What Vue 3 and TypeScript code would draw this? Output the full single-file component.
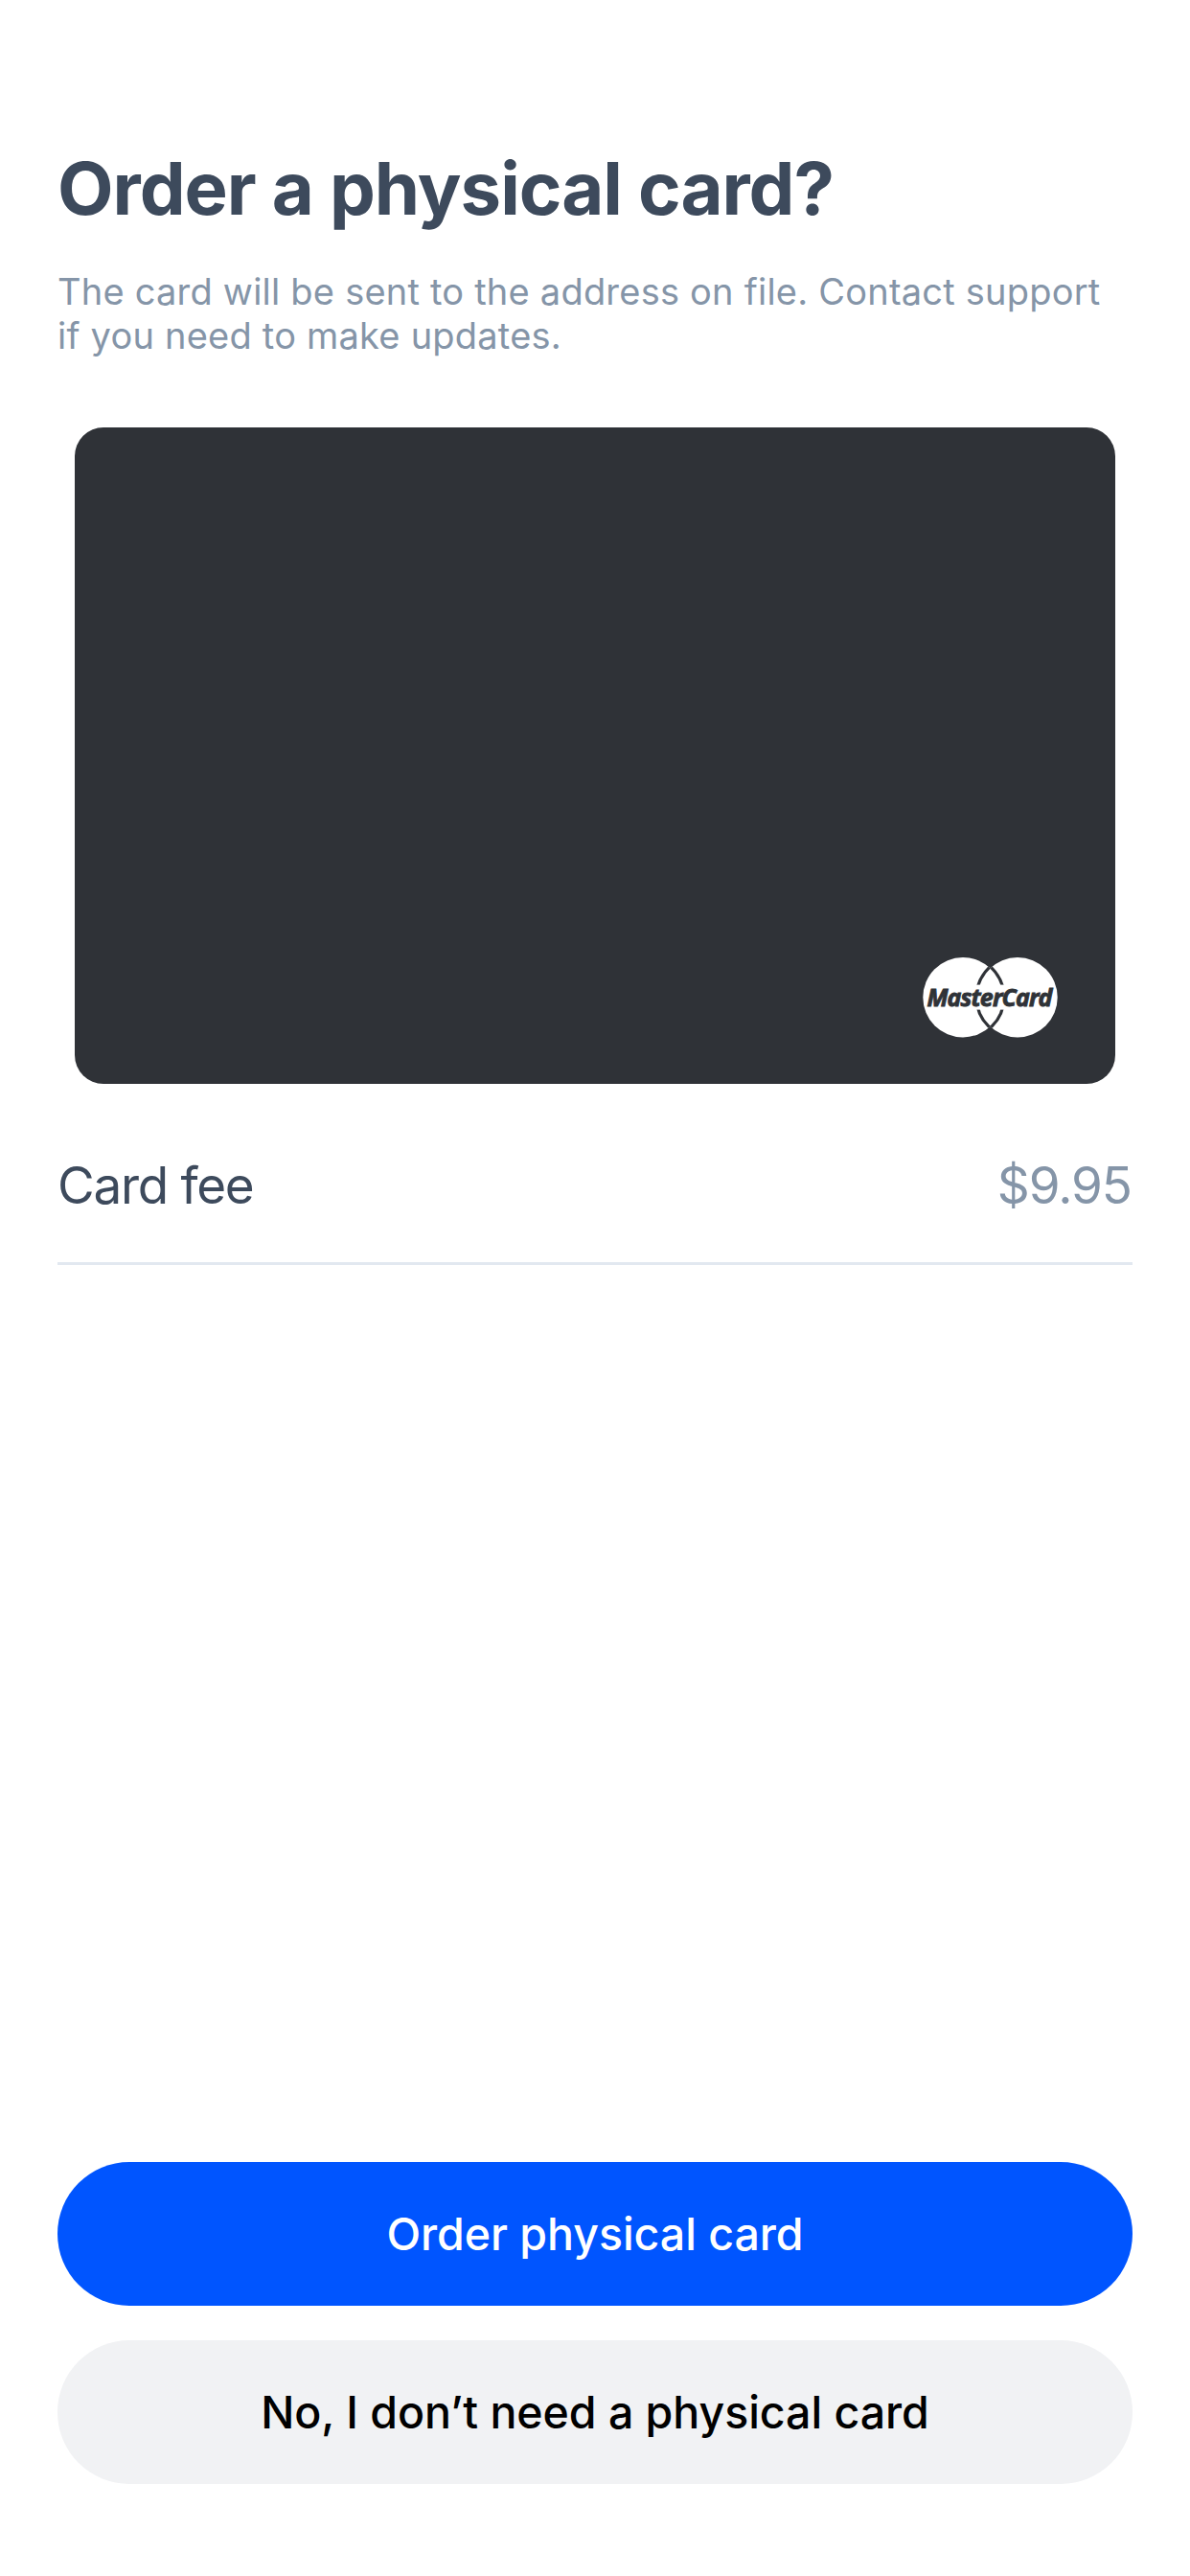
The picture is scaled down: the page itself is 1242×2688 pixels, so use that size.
<script setup lang="ts">
interface Fee {
  label: string
  amount: string
}

const fee: Fee = { label: 'Card fee', amount: '$9.95' }
</script>

<template>
  <main class="screen">
    <h1 class="title">Order a physical card?</h1>
    <p class="subtitle">
      The card will be sent to the address on file. Contact support<br />if you need to make updates.
    </p>

    <div class="card">
      <svg class="brand" width="142" height="84" viewBox="0 0 142 84" aria-label="MasterCard">
        <defs>
          <clipPath id="overlap-left"><circle cx="42" cy="41.7" r="41.7" /></clipPath>
          <clipPath id="overlap-right"><circle cx="99" cy="41.7" r="41.7" /></clipPath>
        </defs>
        <circle cx="42" cy="41.7" r="41.7" fill="#fff" />
        <circle cx="99" cy="41.7" r="41.7" fill="#fff" />
        <g fill="none" stroke="#2f3237" stroke-width="3.2">
          <g clip-path="url(#overlap-left)"><circle cx="99" cy="41.7" r="42.8" /></g>
          <g clip-path="url(#overlap-right)"><circle cx="42" cy="41.7" r="42.8" /></g>
        </g>
        <rect x="50" y="28.6" width="41" height="26" fill="#fff" />
        <text class="brand-name" x="4.5" y="51" textLength="130" lengthAdjust="spacingAndGlyphs">MasterCard</text>
      </svg>
    </div>

    <div class="fee-row">
      <span class="fee-label">{{ fee.label }}</span>
      <span class="fee-amount">{{ fee.amount }}</span>
    </div>

    <div class="actions">
      <button class="button primary" type="button">Order physical card</button>
      <button class="button secondary" type="button">No, I don’t need a physical card</button>
    </div>
  </main>
</template>

<style>
body {
  margin: 0;
  background: #fff;
}
</style>

<style scoped>
.screen {
  box-sizing: border-box;
  display: flex;
  flex-direction: column;
  width: 1242px;
  height: 2688px;
  padding: 150px 60px 96px;
  background: #fff;
  font-family: Inter, 'Liberation Sans', sans-serif;
}

.title {
  margin: 0;
  font-size: 76px;
  font-weight: 700;
  line-height: 92px;
  letter-spacing: -1px;
  color: #3d4a5c;
}

.subtitle {
  margin: 39px 0 0;
  font-size: 38px;
  line-height: 46px;
  letter-spacing: 0.22px;
  white-space: nowrap;
  color: #8595a8;
}

.card {
  box-sizing: border-box;
  display: flex;
  align-items: flex-end;
  justify-content: flex-end;
  height: 685px;
  margin: 73px 18px 0;
  padding: 0 59px 48px 0;
  border-radius: 30px;
  background: #2f3237;
}

.brand {
  display: block;
}

.brand-name {
  font-family: 'Open Sans', 'Noto Sans', sans-serif;
  font-size: 25.5px;
  font-style: italic;
  font-weight: 700;
  letter-spacing: -0.9px;
  fill: #2f3237;
  stroke: #2f3237;
  stroke-width: 0.9px;
}

.fee-row {
  display: flex;
  justify-content: space-between;
  padding: 74px 1px 48px 0;
  border-bottom: 3px solid #e2e8f0;
  font-size: 53px;
  line-height: 64px;
}

.fee-label {
  letter-spacing: -1.3px;
  color: #3d4a5c;
}

.fee-amount {
  letter-spacing: -1.07px;
  color: #8595a8;
}

.actions {
  display: flex;
  flex-direction: column;
  gap: 36px;
  margin-top: auto;
}

.button {
  height: 150px;
  padding: 0;
  border: 0;
  border-radius: 75px;
  font-family: inherit;
  font-size: 46.5px;
  font-weight: 500;
  letter-spacing: -0.05px;
}

.primary {
  background: #0055ff;
  color: #fff;
}

.secondary {
  background: #f1f2f4;
  color: #000;
}
</style>
